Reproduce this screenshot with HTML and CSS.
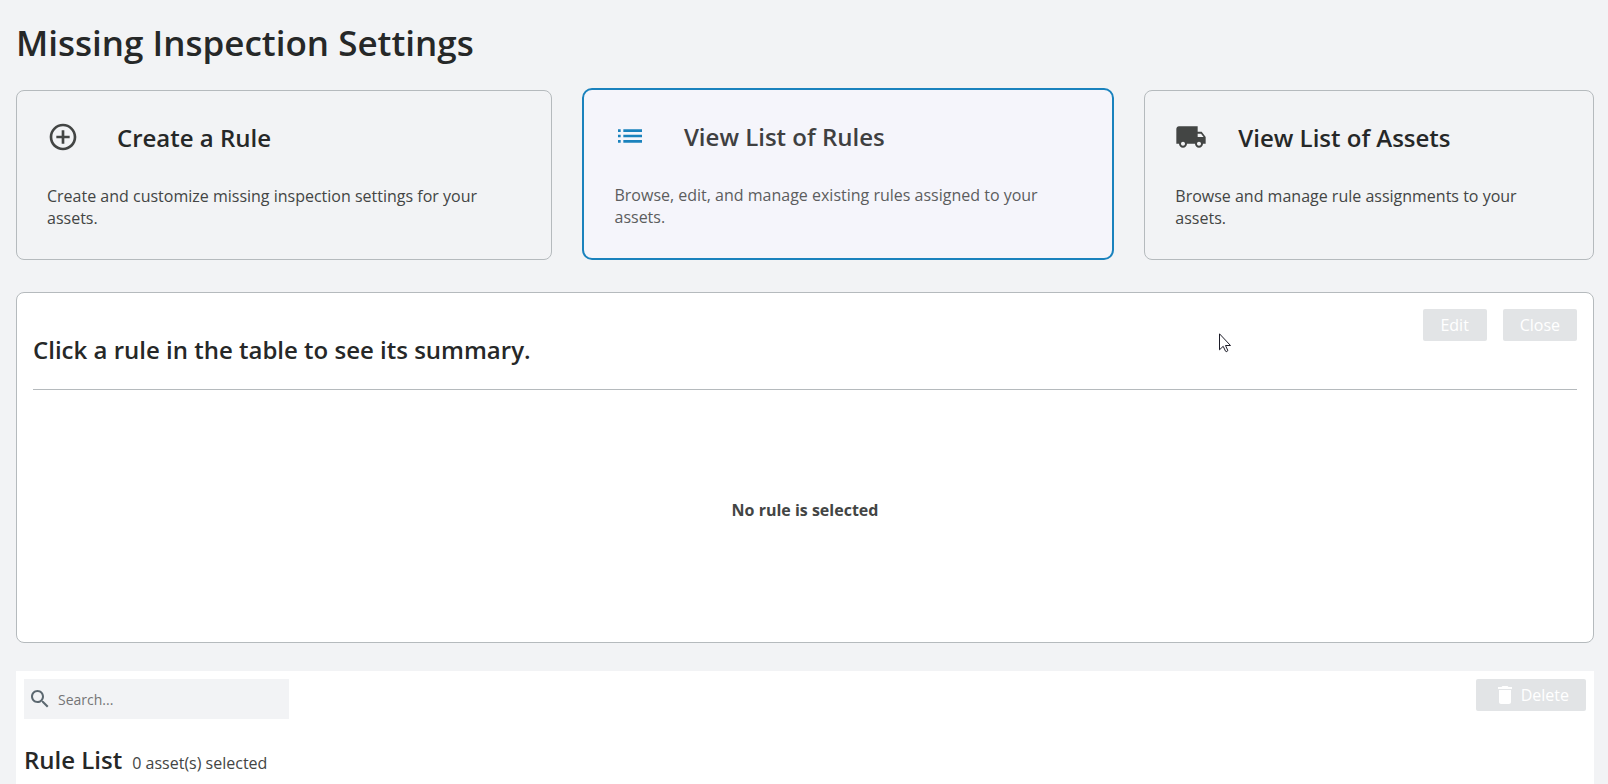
FILE: index.html
```html
<!DOCTYPE html>
<html lang="en">
<head>
  <meta charset="UTF-8" />
  <meta name="viewport" content="width=device-width, initial-scale=1">
  <title>Missing Inspection Settings</title>
  <link rel="stylesheet" href="styles.css">
</head>
<body>

  <h1 class="page-title">Missing Inspection Settings</h1>

  <div class="cards">
    <div class="card">
      <div class="card-header">
        <svg class="card-icon" viewBox="0 0 24 24"><path d="M13 7h-2v4H7v2h4v4h2v-4h4v-2h-4V7zm-1-5C6.48 2 2 6.48 2 12s4.48 10 10 10 10-4.48 10-10S17.52 2 12 2zm0 18c-4.41 0-8-3.59-8-8s3.59-8 8-8 8 3.59 8 8-3.59 8-8 8z"/></svg>
        <h2 class="title">Create a Rule</h2>
      </div>
      <p class="card-text">Create and customize missing inspection settings for your assets.</p>
    </div>

    <div class="card selected">
      <div class="card-header">
        <svg class="card-icon" viewBox="0 0 24 24"><path d="M3 13h2v-2H3v2zm0 4h2v-2H3v2zm0-8h2V7H3v2zm4 4h14v-2H7v2zm0 4h14v-2H7v2zM7 7v2h14V7H7z"/></svg>
        <h2 class="title">View List of Rules</h2>
      </div>
      <p class="card-text">Browse, edit, and manage existing rules assigned to your assets.</p>
    </div>

    <div class="card">
      <div class="card-header">
        <svg class="card-icon" viewBox="0 0 24 24"><path d="M20 8h-3V4H3c-1.1 0-2 .9-2 2v11h2c0 1.66 1.34 3 3 3s3-1.34 3-3h6c0 1.66 1.34 3 3 3s3-1.34 3-3h2v-5l-3-4zM6 18.5c-.83 0-1.5-.67-1.5-1.5s.67-1.5 1.5-1.5 1.5.67 1.5 1.5-.67 1.5-1.5 1.5zm13.5-9l1.96 2.5H17V9.5h2.5zm-1.5 9c-.83 0-1.5-.67-1.5-1.5s.67-1.5 1.5-1.5 1.5.67 1.5 1.5-.67 1.5-1.5 1.5z"/></svg>
        <h2 class="title">View List of Assets</h2>
      </div>
      <p class="card-text">Browse and manage rule assignments to your assets.</p>
    </div>
  </div>

  <section class="summary">
    <div class="summary-header">
      <h2 class="title">Click a rule in the table to see its summary.</h2>
      <div class="actions">
        <button class="btn" disabled>Edit</button>
        <button class="btn" disabled>Close</button>
      </div>
    </div>
    <div class="summary-body">No rule is selected</div>
  </section>

  <section class="list">
    <div class="toolbar">
      <label class="search">
        <svg class="search-icon" viewBox="0 0 24 24"><path d="M15.5 14h-.79l-.28-.27C15.41 12.59 16 11.11 16 9.5 16 5.91 13.09 3 9.5 3S3 5.91 3 9.5 5.91 16 9.5 16c1.61 0 3.09-.59 4.23-1.57l.27.28v.79l5 4.99L20.49 19l-4.99-5zm-6 0C7.01 14 5 11.99 5 9.5S7.01 5 9.5 5 14 7.01 14 9.5 11.99 14 9.5 14z"/></svg>
        <input class="search-input" type="text" placeholder="Search..." aria-label="Search">
      </label>
      <button class="btn btn-delete" disabled>
        <svg class="btn-icon" viewBox="0 0 24 24"><path d="M6 19c0 1.1.9 2 2 2h8c1.1 0 2-.9 2-2V7H6v12zM19 4h-3.5l-1-1h-5l-1 1H5v2h14V4z"/></svg>
        Delete
      </button>
    </div>
    <div class="list-header">
      <h2 class="title">Rule List</h2>
      <span>0 asset(s) selected</span>
    </div>
  </section>

  <svg class="cursor" viewBox="0 0 12 20"><path d="M.5.8v16l3.7-3.5 2.3 4.9c.5 1 2.700.1 2.200-1L6.500 12.500h5z"/></svg>

</body>
</html>
```

FILE: styles.css
```css
* {
  box-sizing: border-box;
}

body {
  margin: 0;
  padding: 16px 14px 0 16px;
  min-height: 100vh;
  display: flex;
  flex-direction: column;
  background: #f2f3f5;
  color: #434544;
  font-family: "Open Sans", sans-serif;
  font-size: 16px;
  line-height: 22px;
}

.page-title {
  margin: 0 0 18px;
  color: #262828;
  font-size: 35px;
  font-weight: 600;
  line-height: 54px;
}

.title {
  margin: 0;
  color: #262828;
  font-size: 24px;
  font-weight: 600;
  line-height: 34px;
}

/* cards */
.cards {
  display: flex;
  align-items: flex-end;
  gap: 30px;
  margin-bottom: 32px;
}

.card {
  flex: 0 1 auto;
  padding: 30px;
  border: 1px solid #b5babd;
  border-radius: 8px;
  cursor: pointer;
}

.card.selected {
  background: #f5f5fb;
  border: 2px solid #1a82bd;
  border-radius: 10px;
  color: #5c5d5e;
}

.card.selected .title {
  color: #3f4041;
}

.card-header {
  display: flex;
  align-items: flex-start;
  column-gap: 8%;
  margin-bottom: 30px;
}

.card-icon {
  flex: none;
  width: 32px;
  height: 32px;
  fill: #434544;
}

.card.selected .card-icon {
  fill: #1a82bd;
}

.card-text {
  margin: 0;
}

/* rule summary */
.summary {
  margin-bottom: 28px;
  padding: 16px 16px 12px;
  background: #fff;
  border: 1px solid #b5babd;
  border-radius: 8px;
}

.summary-header {
  display: flex;
  justify-content: space-between;
  align-items: flex-start;
  border-bottom: 1px solid #b5babd;
}

.summary-header .title {
  margin: 24px 0 22px;
}

.actions {
  display: flex;
  gap: 16px;
}

.summary-body {
  display: flex;
  align-items: center;
  justify-content: center;
  min-height: 240px;
  font-weight: bold;
}

.btn {
  min-width: 64px;
  height: 32px;
  padding: 0 17px;
  border: none;
  border-radius: 2px;
  background: #e2e4e6;
  color: #fff;
  font-family: inherit;
  font-size: 16px;
  line-height: 32px;
}

.btn-delete {
  display: flex;
  align-items: center;
  gap: 4px;
}

.btn-icon {
  width: 24px;
  height: 24px;
  fill: #fff;
}

/* rule list */
.list {
  flex: 1;
  padding: 8px 8px 0;
  background: #fff;
}

.toolbar {
  display: flex;
  justify-content: space-between;
  align-items: flex-start;
  margin-bottom: 24px;
}

.search {
  display: flex;
  align-items: center;
  gap: 6px;
  width: 265px;
  height: 40px;
  padding: 0 4px;
  background: #f2f3f5;
}

.search-icon {
  flex: none;
  width: 24px;
  height: 24px;
  fill: #5c6870;
}

.search-input {
  flex: 1;
  min-width: 0;
  padding: 0;
  border: none;
  outline: none;
  background: none;
  color: #434544;
  font-family: inherit;
  font-size: 14px;
}

.search-input::placeholder {
  color: #757575;
}

.list-header {
  display: flex;
  align-items: baseline;
  gap: 10px;
}

.cursor {
  position: absolute;
  left: 1219px;
  top: 333px;
  width: 12px;
  height: 20px;
  fill: #fff;
  stroke: #1c1c28;
  stroke-width: 1;
}
```
